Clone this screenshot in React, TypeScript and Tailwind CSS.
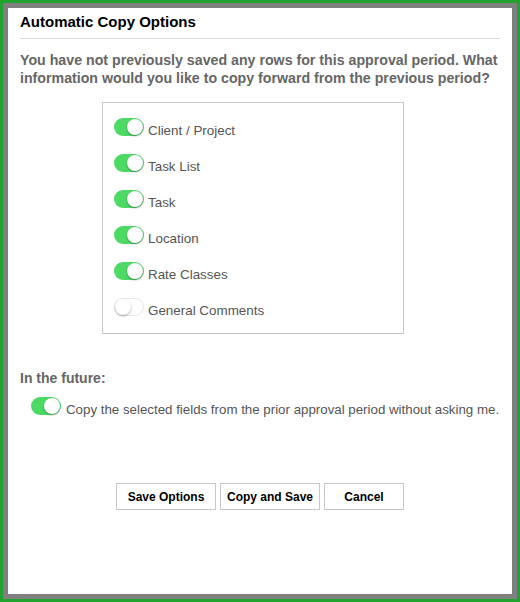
import * as React from 'react';

function Toggle({ on }: { on: boolean }) {
  return (
    <span
      className={
        "relative inline-block w-[30px] h-[18px] rounded-full shrink-0 " +
        (on ? "bg-[#4cd964]" : "bg-white border border-[#e8e8e8]")
      }
    >
      <span
        className={
          "absolute w-[16px] h-[16px] rounded-full bg-white shadow-[0_1px_2px_rgba(0,0,0,0.35)] " +
          (on ? "right-[1px] top-[1px]" : "left-0 top-0")
        }
      />
    </span>
  );
}

const fields = [
  { label: "Client / Project", on: true },
  { label: "Task List", on: true },
  { label: "Task", on: true },
  { label: "Location", on: true },
  { label: "Rate Classes", on: true },
  { label: "General Comments", on: false },
];

function App() {
  return (
    <div className="w-[520px] h-[602px] border-[3px] border-[#22a22f] bg-[#7f7f7f] p-[5px] font-['Liberation_Sans',Arial,sans-serif]">
      <div className="w-full h-full bg-white px-[12px]">
        <h1 className="pt-[5px] pb-[7px] text-[15px] leading-[18px] font-bold text-black border-b border-[#dddddd]">
          Automatic Copy Options
        </h1>
        <p className="mt-[12px] text-[14.2px] leading-[18px] font-bold text-[#666666]">
          You have not previously saved any rows for this approval period. What information would you like to copy forward from the previous period?
        </p>
        <div className="ml-[82px] mt-[15px] w-[302px] border border-[#c8c8c8] pt-[15px] pb-[17px] pl-[11px] flex flex-col gap-[18px]">
          {fields.map((f) => (
            <div key={f.label} className="flex items-center gap-[4px] h-[18px]">
              <Toggle on={f.on} />
              <span className="text-[13.4px] text-[#555555] mt-[8px] whitespace-nowrap">{f.label}</span>
            </div>
          ))}
        </div>
        <div className="mt-[35px] text-[14px] font-bold text-[#666666] leading-[18px]">In the future:</div>
        <div className="mt-[10px] ml-[11px] flex items-center gap-[5px] h-[18px]">
          <Toggle on={true} />
          <span className="text-[13.3px] text-[#555555] mt-[8px] whitespace-nowrap">
            Copy the selected fields from the prior approval period without asking me.
          </span>
        </div>
        <div className="mt-[68px] flex justify-center gap-[4px]">
          <button className="w-[100px] h-[27px] border border-[#c8c8c8] bg-white text-[12px] font-bold text-black">
            Save Options
          </button>
          <button className="w-[100px] h-[27px] border border-[#c8c8c8] bg-white text-[12px] font-bold text-black">
            Copy and Save
          </button>
          <button className="w-[80px] h-[27px] border border-[#c8c8c8] bg-white text-[12px] font-bold text-black">
            Cancel
          </button>
        </div>
      </div>
    </div>
  );
}

export default App;
